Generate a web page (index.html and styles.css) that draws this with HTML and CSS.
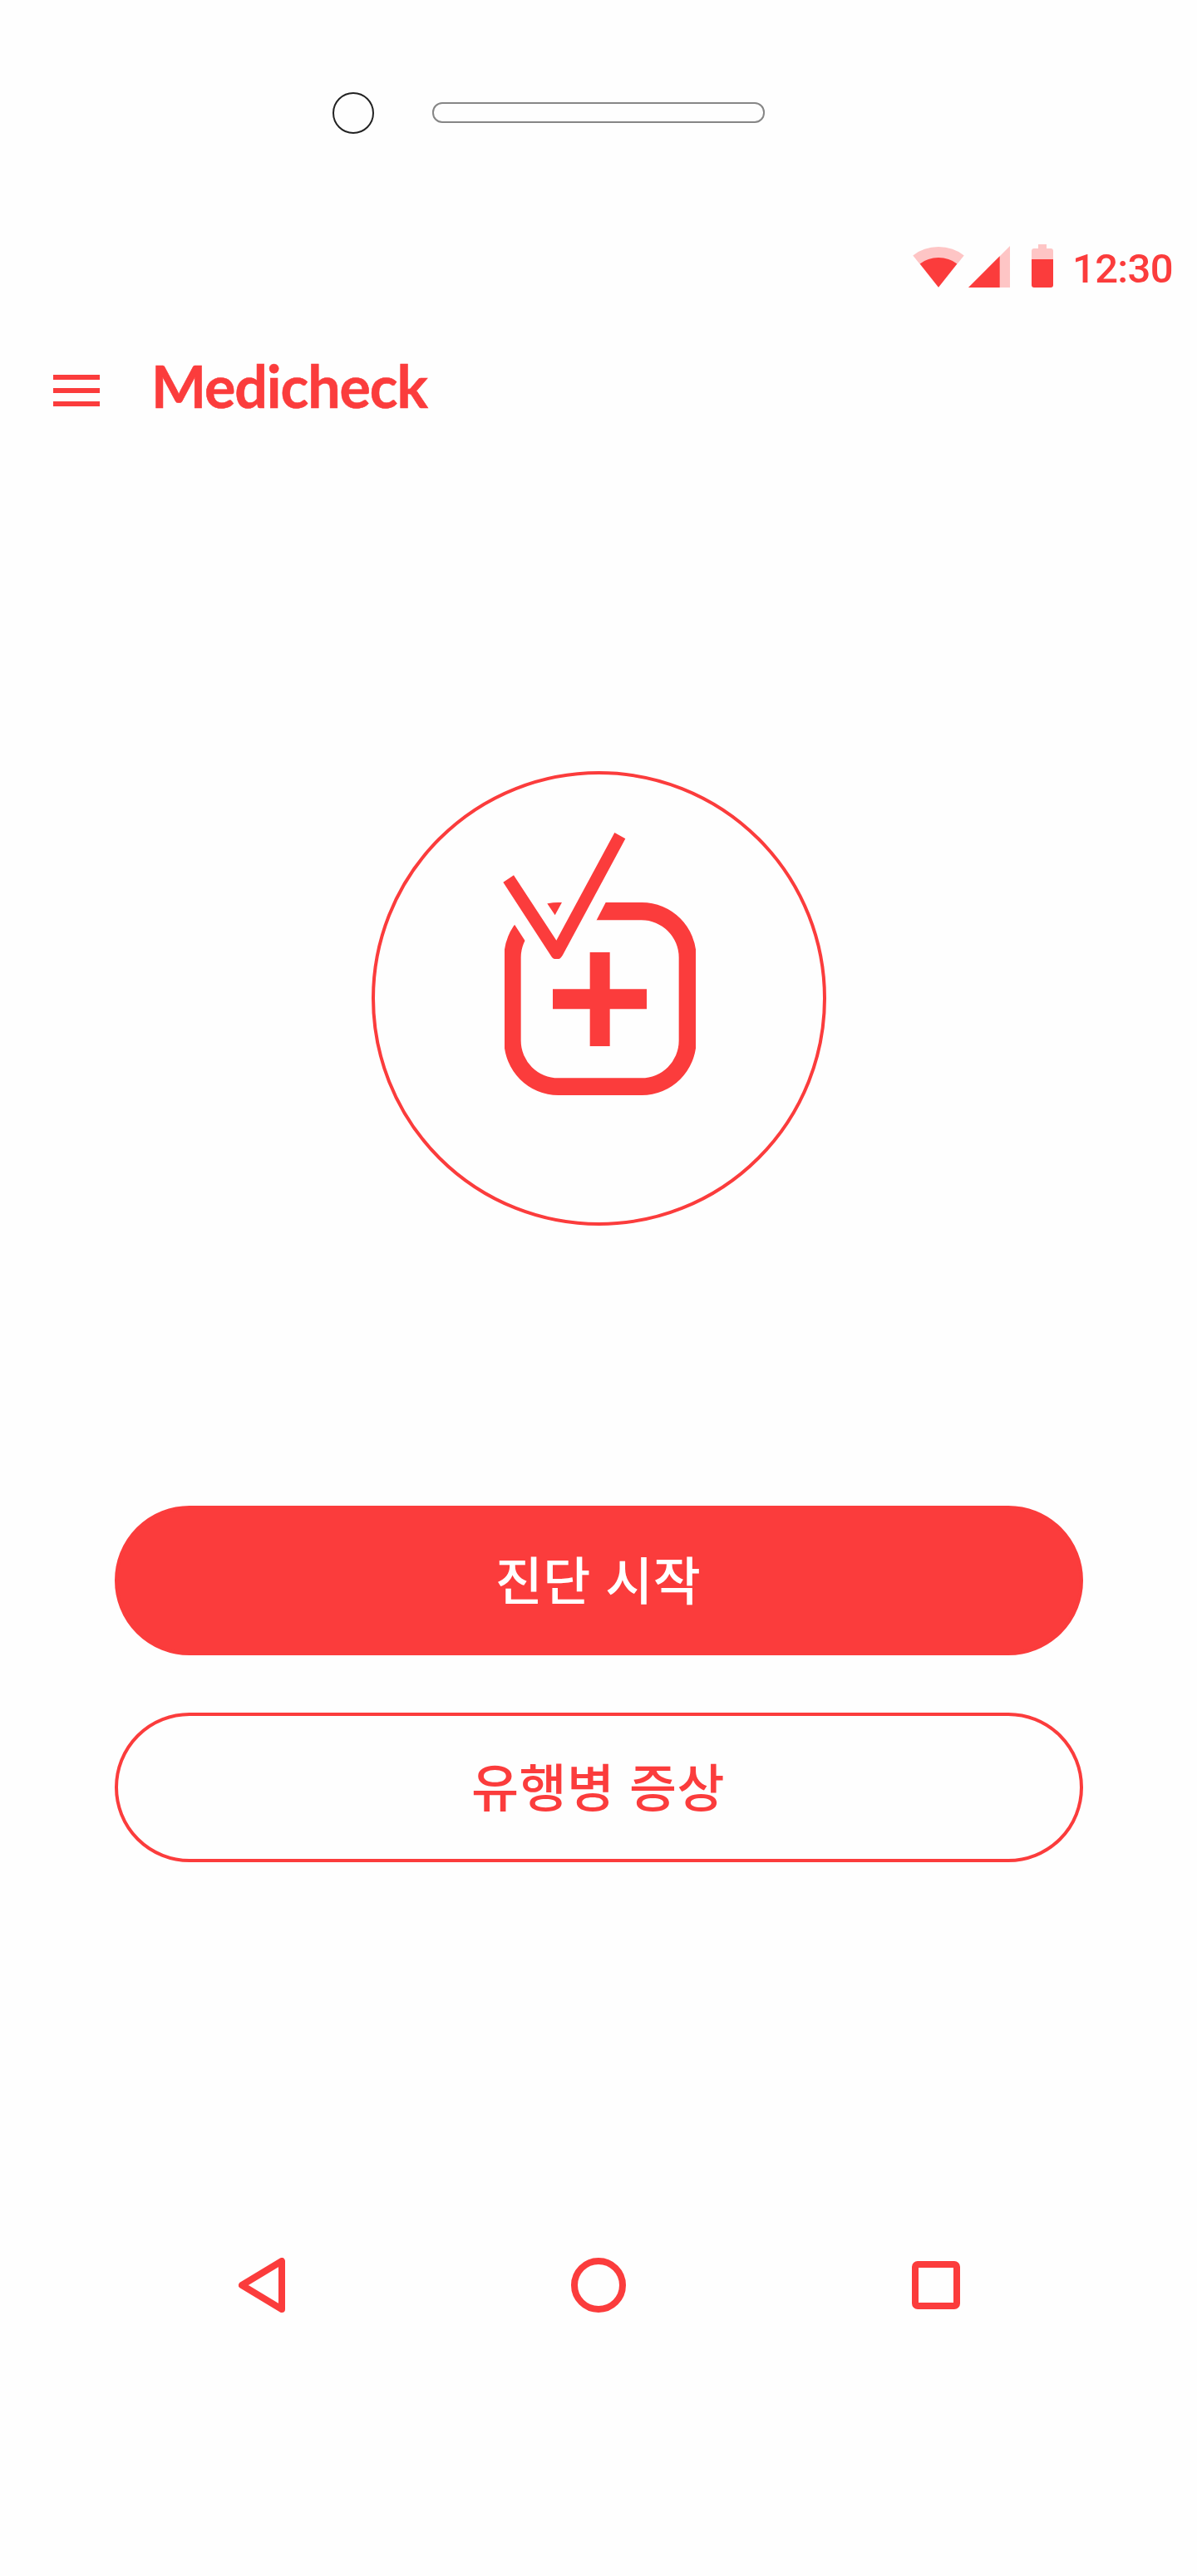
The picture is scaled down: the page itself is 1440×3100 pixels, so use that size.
FILE: index.html
```html
<!DOCTYPE html>
<html lang="ko">
<head>
<meta charset="utf-8">
<title>Medicheck</title>
<link rel="stylesheet" href="styles.css">
</head>
<body>
<div class="phone">
  <div class="bezel">
    <span class="camera"></span>
    <span class="speaker"></span>
  </div>
  <div class="status">
    <svg class="status-icons" width="170" height="54" viewBox="1098 293 170 54" aria-hidden="true">
      <path class="faint" d="M1129 345.7 1098.3 307.5Q1111 297 1129 297T1159.7 307.5Z"/>
      <path d="M1129 345.7 1106.7 317.5Q1116 310 1129 310T1151.3 317.5Z"/>
      <path class="faint" d="M1165 346 1215 296V346Z"/>
      <path d="M1165 346 1202.7 308.3V346Z"/>
      <path class="faint" d="M1249 294h10v5h5q3 0 3 3v10h-26v-10q0-3 3-3h5Z"/>
      <path d="M1241 312h26v31q0 3-3 3h-20q-3 0-3-3Z"/>
    </svg>
    <span class="clock">12:30</span>
  </div>
  <header class="appbar">
    <span class="menu"><i></i><i></i><i></i></span>
    <h1 class="brand">Medicheck</h1>
  </header>
  <main class="main">
    <div class="emblem">
      <svg width="280" height="360" viewBox="0 0 840 1080" aria-hidden="true">
        <clipPath id="sides"><rect x="81" y="300" width="690" height="730"/></clipPath>
        <path clip-path="url(#sides)" fill-rule="evenodd" d="M275 318H576A197 198 0 0 1 773 516V816A197 198 0 0 1 576 1014H275A196 198 0 0 1 79 816V516A196 198 0 0 1 275 318ZM275 382A135 135 0 0 0 140 517V817A135 135 0 0 0 275 952H575A135 135 0 0 0 710 817V517A135 135 0 0 0 575 382Z"/>
        <path class="gap" d="M60 310 156 458 170 480H363L413 382 446 318 500 213H345L263 364 162 213H60Z"/>
        <path d="M76 245 114 220 268 455 478 66 517 88 291 508Q283 522 276 522H262Q255 522 248 510Z"/>
        <path d="M389 498h72v133h133v72H461v134H389V703H255V631H389Z"/>
      </svg>
    </div>
    <button class="btn btn-fill">진단 시작</button>
    <button class="btn btn-line">유행병 증상</button>
  </main>
  <nav class="nav">
    <svg width="56" height="66" viewBox="0 0 56 66" aria-hidden="true"><path class="back" d="M52 4V62L4 33Z"/></svg>
    <span class="home"></span>
    <span class="recent"></span>
  </nav>
</div>
</body>
</html>
```
FILE: styles.css
```css
:root { --red: #fb3c3c; --paper: #fefefe; }
* { box-sizing: border-box; }
body { margin: 0; background: var(--paper); color: var(--red); }
svg { display: block; fill: var(--red); }
.phone { width: 1440px; height: 3100px; overflow: hidden; }
.bezel { display: flex; align-items: flex-start; gap: 70px; height: 50px; margin: 111px 0 0 400px; }
.camera { width: 50px; height: 50px; border: 2px solid #222; border-radius: 50%; }
.speaker { width: 400px; height: 25px; margin-top: 12px; border: 2px solid #868686; border-radius: 12px; }
.status { display: flex; align-items: flex-start; height: 54px; margin: 132px 0 0 1098px; }
.faint { fill: #fec5c5; }
.clock { margin-left: 22px; padding-top: 1px; font: 500 49px/60px Roboto, sans-serif; letter-spacing: -0.7px; white-space: nowrap; }
.appbar { display: flex; align-items: flex-start; height: 90px; margin-top: 78px; padding-left: 64px; }
.menu { display: flex; flex-direction: column; gap: 10px; padding-top: 26px; }
.menu i { width: 56px; height: 6px; background: var(--red); }
.brand { margin: -3px 0 0 62px; font: 700 70px/84px Lato, sans-serif; letter-spacing: -1.1px; -webkit-text-stroke: 0.6px var(--red); }
.main { display: flex; flex-direction: column; align-items: flex-start; padding: 413px 0 0 138px; }
.emblem { width: 547px; height: 547px; margin: 0 0 337px 309px; padding: 48px 0 0 129px; border: 4px solid var(--red); border-radius: 50%; }
.gap { fill: var(--paper); }
.btn { width: 1165px; height: 180px; padding: 0 2px 7px 0; border: 4px solid var(--red); border-radius: 90px; font: 500 62px/84px "Noto Sans CJK KR", sans-serif; letter-spacing: 0.4px; }
.btn-fill { background: var(--red); color: #fff; margin-bottom: 69px; }
.btn-line { background: none; color: var(--red); }
.nav { display: flex; align-items: center; height: 66px; margin: 476px 0 0 287px; }
.back { fill: none; stroke: var(--red); stroke-width: 8; stroke-linejoin: round; }
.home { width: 66px; height: 66px; margin-left: 344px; border: 8px solid var(--red); border-radius: 50%; }
.recent { width: 58px; height: 58px; margin-left: 344px; border: 8px solid var(--red); border-radius: 7px; }
```
